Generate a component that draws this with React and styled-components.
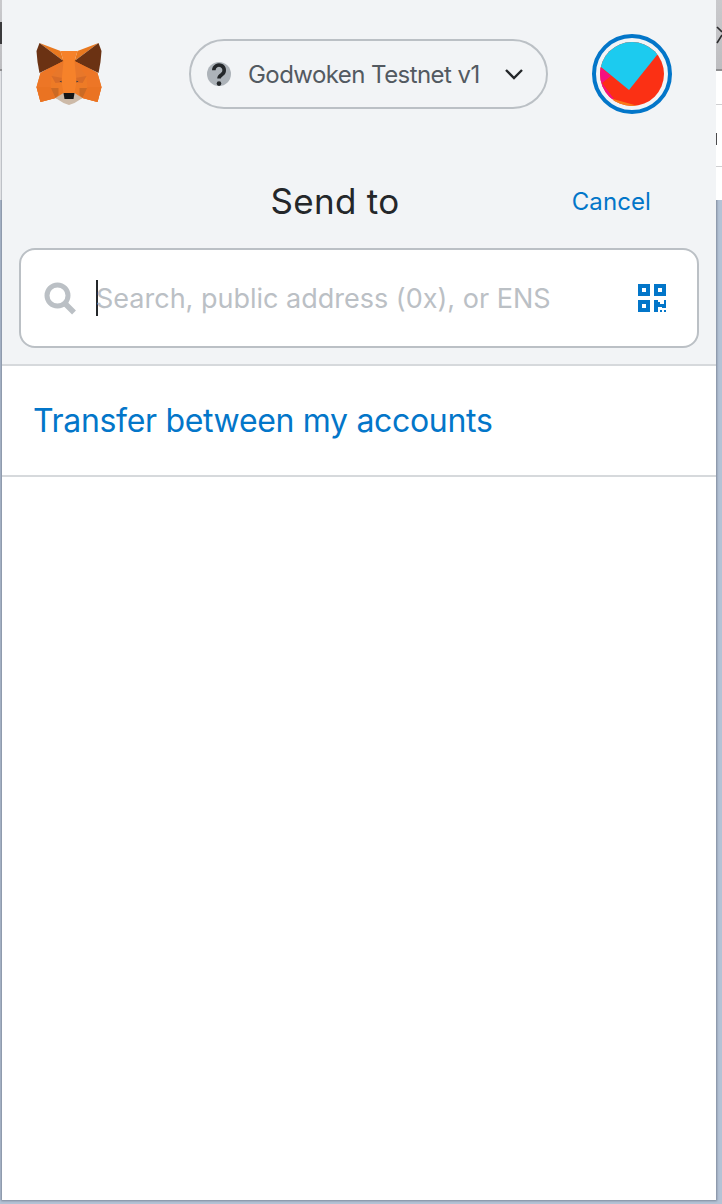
import styled, { createGlobalStyle } from "styled-components";

const Global = createGlobalStyle`
  html, body {
    margin: 0;
    padding: 0;
    background: #c3d1e3;
  }
  body {
    font-family: Inter, "Liberation Sans", sans-serif;
  }
`;

const Desktop = styled.div`
  display: flex;
  width: 722px;
  height: 1204px;
  overflow: hidden;
  background: #b4c3d6;
`;

const Strip = styled.div`
  flex: none;
  width: ${(p) => p.$w}px;
  display: flex;
  flex-direction: column;
  height: 200px;
  background: #fff;
`;

const StripBar = styled.div`
  position: relative;
  height: 71px;
  overflow: hidden;
  background: linear-gradient(#c9c9cc, #bdbdc0);
  border-bottom: 2px solid #8e8e90;
  box-sizing: border-box;
`;

const StripGlyph = styled.svg`
  position: absolute;
  left: 0;
  top: 22px;
`;

const StripRule = styled.div`
  height: 1px;
  margin-top: ${(p) => p.$top}px;
  background: ${(p) => p.$color};
`;

const StripMark = styled.div`
  width: 1px;
  height: 12px;
  margin-top: 28px;
  background: #4a4a4c;
`;

const Popup = styled.div`
  flex: none;
  width: 714px;
  height: 1200px;
  display: flex;
  flex-direction: column;
  background: #fff;
  box-shadow: 0 0 2px 1px rgba(80, 90, 105, 0.55);
`;

const Head = styled.div`
  height: 364px;
  background: #f2f4f6;
  border-bottom: 2px solid #d6d9dc;
  padding: 0 17px;
  display: flex;
  flex-direction: column;
`;

const AppBar = styled.div`
  display: flex;
  align-items: center;
  height: 148px;
`;

const Fox = styled.svg`
  flex: none;
  margin: 0 0 0 16px;
`;

const NetworkPill = styled.div`
  box-sizing: border-box;
  width: 359px;
  height: 70px;
  margin-left: 86px;
  display: flex;
  align-items: center;
  padding: 0 22px 0 16px;
  border: 2px solid #bbc0c5;
  border-radius: 35px;
`;

const NetworkName = styled.span`
  margin-left: 17px;
  flex: 1;
  font-size: 24px;
  letter-spacing: -0.56px;
  color: #535a61;
  white-space: nowrap;
`;

const AvatarRing = styled.div`
  box-sizing: border-box;
  width: 80px;
  height: 80px;
  margin-left: 44px;
  padding: 4px;
  border: 4px solid #0376c9;
  border-radius: 50%;
  display: flex;
`;

const TitleRow = styled.div`
  display: grid;
  grid-template-columns: 1fr auto 1fr;
  align-items: center;
  height: 66px;
  margin: 20px 48px 14px 0;
`;

const Title = styled.h1`
  grid-column: 2;
  margin: 0;
  font-size: 35px;
  letter-spacing: 0.3px;
  font-weight: 400;
  color: #24272a;
`;

const Cancel = styled.button`
  justify-self: end;
  background: none;
  border: 0;
  padding: 0;
  font: inherit;
  font-size: 24px;
  letter-spacing: 0.1px;
  color: #0376c9;
`;

const SearchBox = styled.div`
  box-sizing: border-box;
  height: 100px;
  display: flex;
  align-items: center;
  padding: 0 31px 0 23px;
  background: #fff;
  border: 2px solid #bbc0c5;
  border-radius: 16px;
`;

const Caret = styled.span`
  flex: none;
  width: 2px;
  height: 36px;
  margin: 0 -2px 0 19px;
  background: #24272a;
`;

const Placeholder = styled.span`
  flex: 1;
  font-size: 27px;
  color: #bbc0c5;
  white-space: nowrap;
`;

const TransferRow = styled.div`
  height: 109px;
  display: flex;
  align-items: center;
  padding-left: 31px;
  border-bottom: 2px solid #d6d9dc;
  font-size: 32px;
  letter-spacing: -0.32px;
  color: #0376c9;
`;

const FoxIcon = () => (
  <Fox width="68" height="64" viewBox="0 0 67 64">
    <polygon points="5,31 33.5,14 62,31 66,45 62,60 47,56 33.5,60 20,56 5,60 1,45" fill="#ee7b26" />
    {[false, true].map((mirror) => (
      <g key={String(mirror)} transform={mirror ? "translate(67 0) scale(-1 1)" : undefined}>
        <polygon points="4,1 25,9 28,19" fill="#e8781f" />
        <polygon points="4,1 1,9 2,20 4,31 28,19" fill="#6b3213" />
        <polygon points="5,31 1,45 5,60 20,56 15,45 16,34 28,19" fill="#ed7626" />
        <polygon points="28,19 16,34 20,41 28,40" fill="#e8772a" />
        <polygon points="16,34 20,41 28,40 27,36" fill="#d86c28" />
        <polygon points="14,46 23,46 23,53 20,56" fill="#cc6a24" />
        <polygon points="1,45 15,45 20,56 5,60" fill="#ea7322" />
        <polygon points="24,39.5 27,38.5 26.5,40.5" fill="#233447" />
        <polygon points="20,56 28,51 33.5,51 33.5,63 28,61" fill="#cdbaa8" />
        <polygon points="25,9 33.5,9 33.5,51 28,51 26,40 28,19" fill="#f6822a" />
      </g>
    ))}
    <polygon points="28,51 39,51 38,57 29,57" fill="#161616" />
  </Fox>
);

const Avatar = () => (
  <svg width="64" height="64" viewBox="0 0 64 64">
    <defs>
      <clipPath id="avatar-clip">
        <circle cx="32" cy="32" r="32" />
      </clipPath>
    </defs>
    <g clipPath="url(#avatar-clip)">
      <rect width="64" height="64" fill="#fb3014" />
      <polygon points="0,25 11,34 2,41 14,57 0,57" fill="#f5107f" />
      <polygon points="13,57 38,64 10,64" fill="#fa7a18" />
      <polygon points="1,25 29,48 57,13 64,0 0,0" fill="#1ccbef" />
    </g>
  </svg>
);

const QuestionIcon = () => (
  <svg width="24" height="24" viewBox="0 0 24 24">
    <circle cx="12" cy="12" r="12" fill="#adb3b9" />
    <path d="M6.8 8.2a5.2 5.2 0 1 1 8 4.4c-1.7 1-2.8 1.8-2.8 4" fill="none" stroke="#24272a" strokeWidth="3.6" />
    <circle cx="12" cy="21.6" r="2.3" fill="#24272a" />
  </svg>
);

const Chevron = () => (
  <svg width="20" height="12" viewBox="0 0 20 12">
    <path d="M2 2l8 8 8-8" fill="none" stroke="#24272a" strokeWidth="2.4" />
  </svg>
);

const SearchIcon = () => (
  <svg width="33" height="33" viewBox="0 0 33 33" style={{ flex: "none" }}>
    <circle cx="13.5" cy="13.5" r="10.5" fill="none" stroke="#bbc0c5" strokeWidth="5" />
    <path d="M20.5 21l9.5 9.5" stroke="#bbc0c5" strokeWidth="5.5" />
  </svg>
);

const QrIcon = () => (
  <svg width="28" height="28" viewBox="0 0 28 28" style={{ flex: "none" }}>
    <path
      fill="#0376c9"
      fillRule="evenodd"
      d="M0 0h12v12H0zM4 4v4h4V4zM16 0h12v12H16zM20 4v4h4V4zM0 16h12v12H0zM4 20v4h4v-4zM16 16h4v2h2v2h4v-4h2v8h-4v-1h-4v5h-4z"
    />
    <path fill="#0376c9" d="M22 26h2v2h-2zM26 26h2v2h-2z" />
  </svg>
);

export default function App() {
  return (
    <>
      <Global />
      <Desktop>
        <Strip $w={2}>
          <StripBar>
            <StripGlyph width="2" height="22" viewBox="0 0 2 22">
              <rect width="2" height="22" fill="#3a3a3c" />
            </StripGlyph>
          </StripBar>
        </Strip>
        <Popup>
          <Head>
            <AppBar>
              <FoxIcon />
              <NetworkPill>
                <QuestionIcon />
                <NetworkName>Godwoken Testnet v1</NetworkName>
                <Chevron />
              </NetworkPill>
              <AvatarRing>
                <Avatar />
              </AvatarRing>
            </AppBar>
            <TitleRow>
              <Title>Send to</Title>
              <Cancel>Cancel</Cancel>
            </TitleRow>
            <SearchBox>
              <SearchIcon />
              <Caret />
              <Placeholder>Search, public address (0x), or ENS</Placeholder>
              <QrIcon />
            </SearchBox>
          </Head>
          <TransferRow>Transfer between my accounts</TransferRow>
        </Popup>
        <Strip $w={6}>
          <StripBar>
            <StripGlyph width="6" height="22" viewBox="0 0 6 22">
              <path d="M1 5l5 5M1 21l5-8" stroke="#2c2c2e" strokeWidth="1.6" fill="none" />
            </StripGlyph>
          </StripBar>
          <StripRule $top={33} $color="#cfcfd1" />
          <StripMark />
          <StripRule $top={21} $color="#cfcfd1" />
        </Strip>
      </Desktop>
    </>
  );
}
